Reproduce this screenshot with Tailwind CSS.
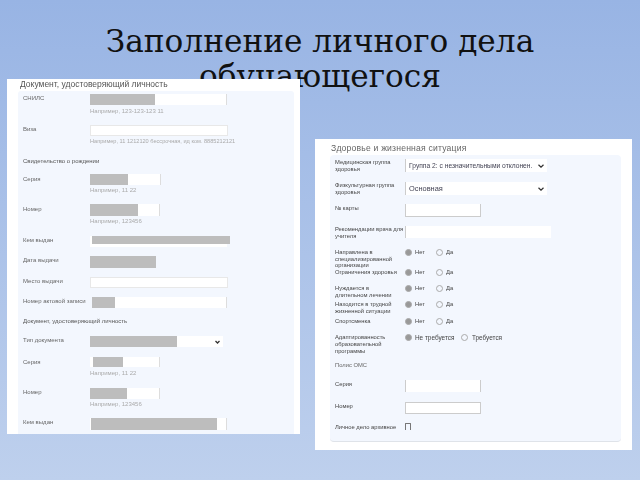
<!DOCTYPE html>
<html lang="ru"><head><meta charset="utf-8">
<script src="https://cdn.jsdelivr.net/npm/@tailwindcss/browser@4"></script>
</head>
<body class="m-0">
<main class="relative w-[640px] h-[480px] overflow-hidden bg-gradient-to-b from-[#98b4e4] to-[#bed0ed]">
<h1 class="absolute left-0 top-[24px] w-full text-center text-[31.2px] leading-[35px] font-normal text-[#111] font-['DejaVu_Serif',serif] px-[80px]">Заполнение личного дела обучающегося</h1>

<section class="absolute left-[7px] top-[79px] w-[293px] h-[355px] bg-white overflow-hidden font-['Liberation_Sans',sans-serif] blur-[0.5px]">
  <h2 class="h-[12px] pl-[13px] pt-[1px] text-[8.5px] leading-[9px] text-[#555] font-normal">Документ, удостоверяющий личность</h2>
  <div class="ml-[11px] w-[276px] h-[343px] bg-[#f3f7fe] rounded-t-[3px] pl-[5px] pt-[3px] text-[6px] leading-[7px] text-[#666]">
    <div class="grid grid-cols-[67px_1fr] h-[31px]"><span class="pt-[1px]">СНИЛС</span><div><div class="w-[137px] h-[11px] bg-white border-r border-[#ddd]"><div class="w-[65px] h-full bg-[#bdbdbd]"></div></div><p class="mt-[3px] text-[#aaa]">Например, 123-123-123 11</p></div></div>
    <div class="grid grid-cols-[67px_1fr] h-[32px]"><span class="pt-[1px]">Виза</span><div><div class="w-[138px] h-[11px] bg-white border border-[#e8e8e8]"></div><p class="mt-[2px] text-[#aaa] whitespace-nowrap text-[5.6px]">Например, 11 1212120 бессрочная, ид ком. 8885212121</p></div></div>
    <div class="h-[17px] pt-[1px] text-[#555]">Свидетельство о рождении</div>
    <div class="grid grid-cols-[67px_1fr] h-[30px]"><span class="pt-[2px]">Серия</span><div><div class="w-[71px] h-[11px] bg-white border-r border-[#ddd]"><div class="w-[38px] h-full bg-[#bdbdbd]"></div></div><p class="mt-[2px] text-[#aaa]">Например, 11 22</p></div></div>
    <div class="grid grid-cols-[67px_1fr] h-[32px]"><span class="pt-[2px]">Номер</span><div><div class="w-[70px] h-[12px] bg-white border-r border-[#ddd]"><div class="w-[48px] h-full bg-[#bdbdbd]"></div></div><p class="mt-[2px] text-[#aaa]">Например, 123456</p></div></div>
    <div class="grid grid-cols-[67px_1fr] h-[20px]"><span class="pt-[1px]">Кем выдан</span><div class="relative w-[137px] h-[11px] bg-white"><div class="ml-[2px] w-[138px] h-[8px] bg-[#bdbdbd]"></div></div></div>
    <div class="grid grid-cols-[67px_1fr] h-[21px]"><span class="pt-[1px]">Дата выдачи</span><div class="w-[66px] h-[12px] bg-[#bdbdbd]"></div></div>
    <div class="grid grid-cols-[67px_1fr] h-[20px]"><span class="pt-[1px]">Место выдачи</span><div class="w-[138px] h-[11px] bg-white border border-[#e8e8e8]"></div></div>
    <div class="grid grid-cols-[67px_1fr] h-[20px]"><span class="pt-[1px] whitespace-nowrap">Номер актовой записи</span><div class="ml-[2px] w-[135px] h-[11px] bg-white border-r border-[#ddd]"><div class="w-[23px] h-full bg-[#bdbdbd]"></div></div></div>
    <div class="h-[19px] pt-[1px] text-[#555]">Документ, удостоверяющий личность</div>
    <div class="grid grid-cols-[67px_1fr] h-[21px]"><span class="pt-[1px]">Тип документа</span><div class="flex items-center w-[133px] h-[11px] bg-white"><div class="w-[87px] h-full bg-[#bdbdbd]"></div><svg class="ml-auto mr-[3px]" width="5" height="4" viewBox="0 0 5 4"><path d="M.5 1 2.5 3 4.5 1" fill="none" stroke="#333" stroke-width="1.3"/></svg></div></div>
    <div class="grid grid-cols-[67px_1fr] h-[31px]"><span class="pt-[2px]">Серия</span><div><div class="w-[70px] h-[10px] bg-white border-r border-[#ddd]"><div class="ml-[3px] w-[30px] h-full bg-[#bdbdbd]"></div></div><p class="mt-[3px] text-[#aaa]">Например, 11 22</p></div></div>
    <div class="grid grid-cols-[67px_1fr] h-[30px]"><span class="pt-[1px]">Номер</span><div><div class="w-[70px] h-[11px] bg-white border-r border-[#ddd]"><div class="w-[37px] h-full bg-[#bdbdbd]"></div></div><p class="mt-[2px] text-[#aaa]">Например, 123456</p></div></div>
    <div class="grid grid-cols-[67px_1fr]"><span class="pt-[1px]">Кем выдан</span><div class="w-[137px] h-[12px] bg-white border-r border-[#ddd]"><div class="ml-[1px] w-[126px] h-full bg-[#bdbdbd]"></div></div></div>
  </div>
</section>

<section class="absolute left-[315px] top-[139px] w-[317px] h-[311px] bg-white overflow-hidden font-['Liberation_Sans',sans-serif] blur-[0.5px]">
  <h2 class="h-[16px] pl-[16px] pt-[4px] text-[8.6px] leading-[10px] tracking-[0.2px] text-[#666] font-normal">Здоровье и жизненная ситуация</h2>
  <div class="ml-[15px] w-[291px] h-[287px] bg-[#f3f7fe] rounded-[4px] border-b border-[#dfe3e9] pl-[5px] pt-[4px] text-[5.8px] leading-[7px] text-[#444]">
    <div class="grid grid-cols-[70px_1fr] h-[23px]"><span>Медицинская группа<br>здоровья</span><div class="flex items-center w-[142px] h-[13px] bg-white border-l border-[#ccc] pl-[3px] text-[6.7px] text-[#445] whitespace-nowrap">Группа 2: с незначительными отклонен.<svg class="ml-auto mr-[3px]" width="6" height="4" viewBox="0 0 6 4"><path d="M.5 .8 3 3.2 5.5 .8" fill="none" stroke="#333" stroke-width="1.2"/></svg></div></div>
    <div class="grid grid-cols-[70px_1fr] h-[22px]"><span>Физкультурная группа<br>здоровья</span><div class="flex items-center w-[142px] h-[13px] bg-white border-l border-[#ccc] pl-[3px] text-[7.4px] text-[#445]">Основная<svg class="ml-auto mr-[3px]" width="6" height="4" viewBox="0 0 6 4"><path d="M.5 .8 3 3.2 5.5 .8" fill="none" stroke="#333" stroke-width="1.2"/></svg></div></div>
    <div class="grid grid-cols-[70px_1fr] h-[22px]"><span class="pt-[1px]">№ карты</span><div class="w-[76px] h-[13px] bg-white border border-[#ccc] border-t-0"></div></div>
    <div class="grid grid-cols-[70px_1fr] h-[23px]"><span>Рекомендации врача для<br>учителя</span><div class="w-[146px] h-[12px] bg-white border-l border-[#ccc]"></div></div>
    <div class="grid grid-cols-[70px_1fr] h-[20px]"><span class="leading-[6.5px]">Направлена в<br>специализированной<br>организации</span><div class="flex items-center h-[7px] gap-[2px]"><i class="w-[7px] h-[7px] rounded-full border border-[#aaa] bg-[#999] not-italic"></i><span class="w-[20px] pl-[1px]">Нет</span><i class="w-[7px] h-[7px] rounded-full border border-[#aaa] not-italic"></i><span class="pl-[1px]">Да</span></div></div>
    <div class="grid grid-cols-[70px_1fr] h-[16px]"><span class="whitespace-nowrap">Ограничения здоровья</span><div class="flex items-center h-[7px] gap-[2px]"><i class="w-[7px] h-[7px] rounded-full border border-[#aaa] bg-[#999] not-italic"></i><span class="w-[20px] pl-[1px]">Нет</span><i class="w-[7px] h-[7px] rounded-full border border-[#aaa] not-italic"></i><span class="pl-[1px]">Да</span></div></div>
    <div class="grid grid-cols-[70px_1fr] h-[16px]"><span>Нуждается в<br>длительном лечении</span><div class="flex items-center h-[7px] gap-[2px]"><i class="w-[7px] h-[7px] rounded-full border border-[#aaa] bg-[#999] not-italic"></i><span class="w-[20px] pl-[1px]">Нет</span><i class="w-[7px] h-[7px] rounded-full border border-[#aaa] not-italic"></i><span class="pl-[1px]">Да</span></div></div>
    <div class="grid grid-cols-[70px_1fr] h-[17px]"><span>Находится в трудной<br>жизненной ситуации</span><div class="flex items-center h-[7px] gap-[2px]"><i class="w-[7px] h-[7px] rounded-full border border-[#aaa] bg-[#999] not-italic"></i><span class="w-[20px] pl-[1px]">Нет</span><i class="w-[7px] h-[7px] rounded-full border border-[#aaa] not-italic"></i><span class="pl-[1px]">Да</span></div></div>
    <div class="grid grid-cols-[70px_1fr] h-[16px]"><span>Спортсменка</span><div class="flex items-center h-[7px] gap-[2px]"><i class="w-[7px] h-[7px] rounded-full border border-[#aaa] bg-[#999] not-italic"></i><span class="w-[20px] pl-[1px]">Нет</span><i class="w-[7px] h-[7px] rounded-full border border-[#aaa] not-italic"></i><span class="pl-[1px]">Да</span></div></div>
    <div class="grid grid-cols-[70px_1fr] h-[26px]"><span>Адаптированность<br>образовательной<br>программы</span><div class="flex items-center h-[7px] gap-[2px]"><i class="w-[7px] h-[7px] rounded-full border border-[#aaa] bg-[#999] not-italic"></i><span class="w-[45px] pl-[1px] whitespace-nowrap text-[6.4px]">Не требуется</span><i class="w-[7px] h-[7px] rounded-full border border-[#aaa] not-italic"></i><span class="pl-[2px] text-[6.4px]">Требуется</span></div></div>
    <div class="h-[20px] pt-[2px] text-[#666]">Полис ОМС</div>
    <div class="grid grid-cols-[70px_1fr] h-[22px]"><span class="pt-[1px]">Серия</span><div class="w-[76px] h-[12px] bg-white border-x border-[#ccc]"></div></div>
    <div class="grid grid-cols-[70px_1fr] h-[21px]"><span class="pt-[1px]">Номер</span><div class="w-[76px] h-[12px] bg-white border border-[#ccc]"></div></div>
    <div class="grid grid-cols-[70px_1fr]"><span class="pt-[1px] whitespace-nowrap">Личное дело архивное</span><div class="w-[6px] h-[7px] border border-[#777] border-b-0 rounded-t-[1px]"></div></div>
  </div>
</section>
</main>
</body></html>
